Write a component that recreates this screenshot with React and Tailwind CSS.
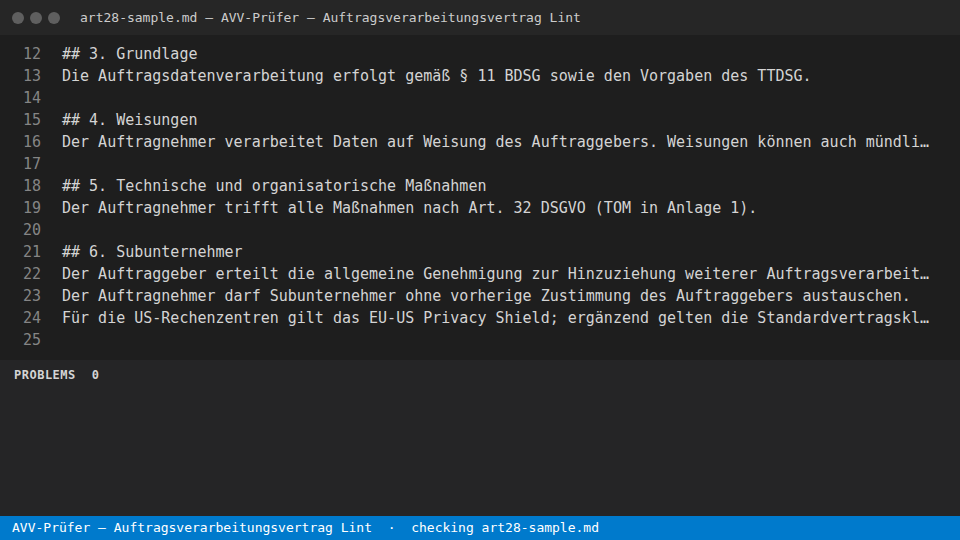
import React from "react";

const MONO = "font-['DejaVu_Sans_Mono','Liberation_Mono',monospace]";

const lines = [
	{ n: 12, text: "## 3. Grundlage" },
	{ n: 13, text: "Die Auftragsdatenverarbeitung erfolgt gemäß § 11 BDSG sowie den Vorgaben des TTDSG." },
	{ n: 14, text: "" },
	{ n: 15, text: "## 4. Weisungen" },
	{ n: 16, text: "Der Auftragnehmer verarbeitet Daten auf Weisung des Auftraggebers. Weisungen können auch mündli…" },
	{ n: 17, text: "" },
	{ n: 18, text: "## 5. Technische und organisatorische Maßnahmen" },
	{ n: 19, text: "Der Auftragnehmer trifft alle Maßnahmen nach Art. 32 DSGVO (TOM in Anlage 1)." },
	{ n: 20, text: "" },
	{ n: 21, text: "## 6. Subunternehmer" },
	{ n: 22, text: "Der Auftraggeber erteilt die allgemeine Genehmigung zur Hinzuziehung weiterer Auftragsverarbeit…" },
	{ n: 23, text: "Der Auftragnehmer darf Subunternehmer ohne vorherige Zustimmung des Auftraggebers austauschen." },
	{ n: 24, text: "Für die US-Rechenzentren gilt das EU-US Privacy Shield; ergänzend gelten die Standardvertragskl…" },
	{ n: 25, text: "" },
];

export default function App() {
	return (
		<div className={`w-[960px] h-[540px] flex flex-col bg-[#1e1e1e] overflow-hidden ${MONO}`}>
			{/* Title bar */}
			<div className="h-[35px] shrink-0 flex items-center bg-[#262626] pl-3">
				<div className="flex gap-[6px]">
					<span className="w-3 h-3 rounded-full bg-[#5f5f5f]" />
					<span className="w-3 h-3 rounded-full bg-[#5f5f5f]" />
					<span className="w-3 h-3 rounded-full bg-[#5f5f5f]" />
				</div>
				<span className="ml-5 text-[13px] text-[#cccccc] whitespace-nowrap">
					art28-sample.md — AVV-Prüfer — Auftragsverarbeitungsvertrag Lint
				</span>
			</div>

			{/* Editor */}
			<div className="h-[325px] shrink-0 pt-2 bg-[#1e1e1e]">
				{lines.map((l) => (
					<div key={l.n} className="flex h-[22px] items-center text-[15px] leading-[22px]">
						<span className="w-[41px] shrink-0 text-right text-[#858585]">{l.n}</span>
						<span className="ml-[21px] whitespace-pre text-[#d4d4d4]">{l.text}</span>
					</div>
				))}
			</div>

			{/* Panel */}
			<div className="flex-1 bg-[#252526] px-[14px] pt-[7px]">
				<div className="flex items-center gap-4 text-[12px] font-bold tracking-[0.5px] text-[#d4d4d4] leading-[16px]">
					<span>PROBLEMS</span>
					<span>0</span>
				</div>
			</div>

			{/* Status bar */}
			<div className="h-6 shrink-0 flex items-center bg-[#007acc] px-3 text-[13px] text-white whitespace-pre">
				AVV-Prüfer — Auftragsverarbeitungsvertrag Lint  ·  checking art28-sample.md
			</div>
		</div>
	);
}
